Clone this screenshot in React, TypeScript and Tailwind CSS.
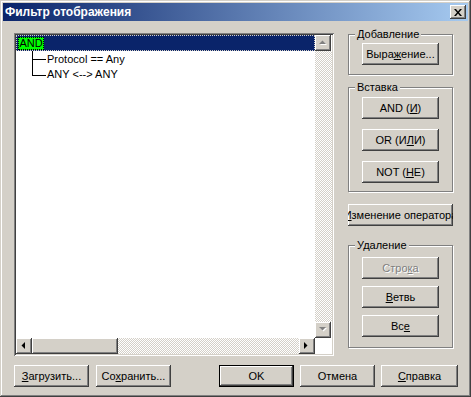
import React from 'react';

// classic 3D bevels
const raised =
  'shadow-[inset_-1px_-1px_#404040,inset_1px_1px_#ffffff,inset_-2px_-2px_#808080,inset_2px_2px_#d4d0c8]';
const sunken =
  'shadow-[inset_1px_1px_#808080,inset_-1px_-1px_#ffffff,inset_2px_2px_#404040,inset_-2px_-2px_#d4d0c8]';
const hatch =
  'bg-[repeating-conic-gradient(#d4d0c8_0%_25%,#ffffff_0%_50%)] bg-[length:2px_2px]';

function Btn({
  children,
  className = '',
  isDefault = false,
}: {
  children: React.ReactNode;
  className?: string;
  isDefault?: boolean;
}) {
  return (
    <div
      className={`flex h-[22px] items-center justify-center overflow-hidden whitespace-nowrap bg-[#d4d0c8] text-black ${raised} ${
        isDefault ? 'border border-black' : ''
      } ${className}`}
    >
      {children}
    </div>
  );
}

function Group({
  label,
  className,
  children,
}: {
  label: string;
  className: string;
  children: React.ReactNode;
}) {
  return (
    <fieldset
      className={`flex flex-col items-center border border-[#808080] shadow-[inset_1px_1px_#ffffff,1px_1px_#ffffff] ${className}`}
    >
      <legend className="ml-[6px] bg-[#d4d0c8] px-[2px] leading-[12px]">{label}</legend>
      {children}
    </fieldset>
  );
}

// little triangle for the scroll buttons
function Arrow({ dir, disabled = false }: { dir: 'up' | 'down' | 'left' | 'right'; disabled?: boolean }) {
  const pts: Record<string, string> = {
    up: '0,4 7,4 3.5,0.5',
    down: '0,0 7,0 3.5,3.5',
    left: '4,0 4,7 0.5,3.5',
    right: '0,0 0,7 3.5,3.5',
  };
  const w = dir === 'up' || dir === 'down' ? 8 : 5;
  const h = dir === 'up' || dir === 'down' ? 5 : 8;
  return (
    <svg width={w + 1} height={h + 1} viewBox={`0 0 ${w + 1} ${h + 1}`}>
      {disabled && <polygon points={pts[dir]} fill="#ffffff" transform="translate(1,1)" />}
      <polygon points={pts[dir]} fill={disabled ? '#808080' : '#000000'} />
    </svg>
  );
}

function ScrollBtn({ dir, disabled }: { dir: 'up' | 'down' | 'left' | 'right'; disabled?: boolean }) {
  return (
    <div className={`flex h-[16px] w-[16px] shrink-0 items-center justify-center bg-[#d4d0c8] ${raised}`}>
      <Arrow dir={dir} disabled={disabled} />
    </div>
  );
}

// connector lines of the tree
function Branch({ last }: { last?: boolean }) {
  return (
    <svg width="14" height="16" className="ml-[16px] shrink-0">
      <line x1="0.5" y1="0" x2="0.5" y2={last ? 8.5 : 16} stroke="#000" />
      <line x1="0" y1="8.5" x2="14" y2="8.5" stroke="#000" />
    </svg>
  );
}

export default function App() {
  return (
    <div
      className={`flex h-[397px] w-[471px] flex-col bg-[#d4d0c8] p-[3px] font-['Liberation_Sans',Arial,sans-serif] text-[11px] text-black shadow-[inset_-1px_-1px_#404040,inset_1px_1px_#d4d0c8,inset_-2px_-2px_#808080,inset_2px_2px_#ffffff]`}
    >
      {/* заголовок окна */}
      <div className="flex h-[18px] shrink-0 items-center bg-[linear-gradient(to_right,#0a246a,#a6caf0)] pl-[2px]">
        <span className="text-[12px] font-bold text-white">Фильтр отображения</span>
        <div className={`ml-auto mr-[2px] flex h-[14px] w-[16px] items-center justify-center bg-[#d4d0c8] ${raised}`}>
          <svg width="8" height="7" viewBox="0 0 8 7">
            <path d="M0 0h2l2 2.5L6 0h2L5 3.5 8 7H6L4 4.5 2 7H0l3-3.5z" fill="#000" />
          </svg>
        </div>
      </div>

      <div className="flex flex-1 flex-col pl-[11px] pt-[12px]">
        <div className="flex items-start">
          {/* дерево фильтра */}
          <div className={`h-[323px] w-[320px] shrink-0 bg-white p-[2px] ${sunken}`}>
            <div className="grid h-full grid-cols-[1fr_17px] grid-rows-[1fr_16px]">
              <div className="overflow-hidden">
                <div className="flex h-[16px] items-start border border-dotted border-[#d4d0c8] bg-[#0a246a]">
                  <div className="ml-[1px] mt-[1px] flex h-[13px] w-[26px] items-center justify-center border border-dotted border-black bg-[#00ff00] leading-none">
                    AND
                  </div>
                </div>
                <div className="flex h-[16px] items-center">
                  <Branch />
                  <span className="ml-[1px]">Protocol == Any</span>
                </div>
                <div className="flex h-[15px] items-center">
                  <Branch last />
                  <span className="ml-[1px]">ANY &lt;--&gt; ANY</span>
                </div>
              </div>
              <div className="flex flex-col">
                <ScrollBtn dir="up" disabled />
                <div className={`flex-1 ${hatch}`} />
                <ScrollBtn dir="down" disabled />
              </div>
              <div className="flex">
                <ScrollBtn dir="left" />
                <div className={`h-[16px] w-[86px] shrink-0 bg-[#d4d0c8] ${raised}`} />
                <div className={`flex-1 ${hatch}`} />
                <ScrollBtn dir="right" />
              </div>
              <div className="bg-white" />
            </div>
          </div>

          {/* правая колонка */}
          <div className="-mt-[5px] ml-[14px] flex w-[105px] flex-col">
            <Group label="Добавление" className="h-[47px] pt-[3px]">
              <Btn className="w-[77px]">
                <span>
                  Выра<u>ж</u>ение...
                </span>
              </Btn>
            </Group>
            <Group label="Вставка" className="mt-[6px] h-[111px] gap-[10px] pt-[4px]">
              <Btn className="w-[77px]">
                <span>
                  AND (<u>И</u>)
                </span>
              </Btn>
              <Btn className="w-[77px]">
                <span>
                  OR (И<u>Л</u>И)
                </span>
              </Btn>
              <Btn className="w-[77px]">
                <span>
                  NOT (<u>Н</u>Е)
                </span>
              </Btn>
            </Group>
            <Btn className="mt-[12px] w-[105px]">
              <span>
                <u>И</u>зменение оператора
              </span>
            </Btn>
            <Group label="Удаление" className="mt-[13px] h-[109px] gap-[7px] pt-[6px]">
              <Btn className="w-[77px]">
                <span className="text-[#808080] [text-shadow:1px_1px_#ffffff]">
                  Стро<u>к</u>а
                </span>
              </Btn>
              <Btn className="w-[77px]">
                <span>
                  <u>В</u>етвь
                </span>
              </Btn>
              <Btn className="w-[77px]">
                <span>
                  Вс<u>е</u>
                </span>
              </Btn>
            </Group>
          </div>
        </div>

        {/* нижние кнопки */}
        <div className="mt-[9px] flex">
          <Btn className="w-[75px]">
            <span>
              <u>З</u>агрузить...
            </span>
          </Btn>
          <Btn className="ml-[7px] w-[75px]">
            <span>
              Со<u>х</u>ранить...
            </span>
          </Btn>
          <Btn className="ml-[48px] w-[75px]" isDefault>
            <span>OK</span>
          </Btn>
          <Btn className="ml-[6px] w-[75px]">
            <span>Отмена</span>
          </Btn>
          <Btn className="ml-[6px] w-[77px]">
            <span>
              <u>С</u>правка
            </span>
          </Btn>
        </div>
      </div>
    </div>
  );
}
